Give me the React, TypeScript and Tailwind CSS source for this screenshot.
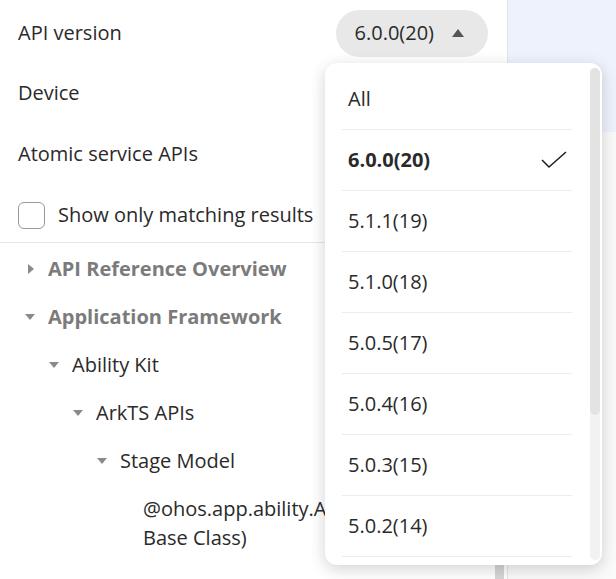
import React from "react";

const Tri = ({ down }: { down?: boolean }) => (
  <svg width="12" height="12" viewBox="0 0 12 12" className="shrink-0">
    {down ? <path d="M1 3h10L6 9z" fill="#8a8a8a" /> : <path d="M3 1v10l6-5z" fill="#8a8a8a" />}
  </svg>
);

const versions = ["All", "6.0.0(20)", "5.1.1(19)", "5.1.0(18)", "5.0.5(17)", "5.0.4(16)", "5.0.3(15)", "5.0.2(14)", "5.0.1(13)"];

export default function App() {
  return (
    <div className="relative w-[616px] h-[579px] overflow-hidden bg-white text-[20px] text-[#2a2a2a]" style={{ fontFamily: '"Open Sans","Noto Sans",sans-serif' }}>
      <div className="flex h-full">
        <div className="relative w-[508px] shrink-0 border-r border-[#e6e6e6] bg-white">
          <div className="flex items-center justify-between pl-[18px] pr-[19px] h-[66px]">
            <span>API version</span>
            <div className="flex items-center gap-[18px] h-[47px] rounded-full bg-[#e8e8e8] pl-[19px] pr-[24px]">
              <span>6.0.0(20)</span>
              <svg width="12" height="10" viewBox="0 0 12 10"><path d="M0 9L6 1L12 9z" fill="#555" /></svg>
            </div>
          </div>
          <div className="pl-[18px] h-[54px] flex items-center">Device</div>
          <div className="pl-[18px] h-[68px] flex items-center">Atomic service APIs</div>
          <div className="pl-[18px] h-[55px] flex items-center gap-[13px] border-b border-[#e6e6e6]">
            <div className="w-[27px] h-[27px] rounded-[6px] border border-[#999]" />
            <span>Show only matching results</span>
          </div>
          <div className="flex flex-col font-bold text-[#7b7b7b]">
            <div className="h-[50px] flex items-center gap-[11px] pl-[25px] pt-[1px]"><Tri /><span>API Reference Overview</span></div>
            <div className="h-[48px] flex items-center gap-[12px] pl-[24px]"><Tri down /><span>Application Framework</span></div>
          </div>
          <div className="flex flex-col text-[#2a2a2a]">
            <div className="h-[48px] flex items-center gap-[12px] pl-[48px]"><Tri down /><span>Ability Kit</span></div>
            <div className="h-[48px] flex items-center gap-[12px] pl-[72px]"><Tri down /><span>ArkTS APIs</span></div>
            <div className="h-[48px] flex items-center gap-[12px] pl-[96px]"><Tri down /><span>Stage Model</span></div>
            <div className="pl-[143px] pt-[9px] leading-[29px] whitespace-nowrap">@ohos.app.ability.AbilityConstant (Ability<br />Base Class)</div>
            <div className="pl-[143px] pt-[20px] leading-[29px] whitespace-nowrap">@ohos.app.ability.AbilityLifecycleCallback</div>
          </div>
          <div className="absolute right-[3px] top-[555px] w-[9px] h-[30px] bg-[#d6d6d6]" />
        </div>
        <div className="flex-1 flex flex-col">
          <div className="h-[132px] bg-[#eef2fc]" />
          <div className="flex-1 bg-[#fafafa]" />
        </div>
      </div>

      <div className="absolute left-[325px] top-[63px] w-[277px] h-[502px] rounded-[12px] bg-white shadow-[0_4px_16px_rgba(0,0,0,0.18)] overflow-hidden">
        <div className="absolute right-[2px] top-[5px] bottom-[5px] w-[10px] rounded-full bg-[#f2f2f2]">
          <div className="h-[347px] rounded-full bg-[#e3e3e3]" />
        </div>
        <div className="flex flex-col pl-[17px] pr-[30px] pt-[5px]">
          {versions.map((v, i) => (
            <div key={v} className={`h-[61px] flex items-center justify-between pl-[6px] ${i === 0 ? "" : "border-t border-[#ececec]"} ${i === 1 ? "font-bold" : ""}`}>
              <span>{v}</span>
              {i === 1 && (
                <svg width="28" height="20" viewBox="0 0 28 20" className="mr-[4px]"><path d="M2 10l7 7L26 2" fill="none" stroke="#222" strokeWidth="1.6" /></svg>
              )}
            </div>
          ))}
        </div>
      </div>
    </div>
  );
}
